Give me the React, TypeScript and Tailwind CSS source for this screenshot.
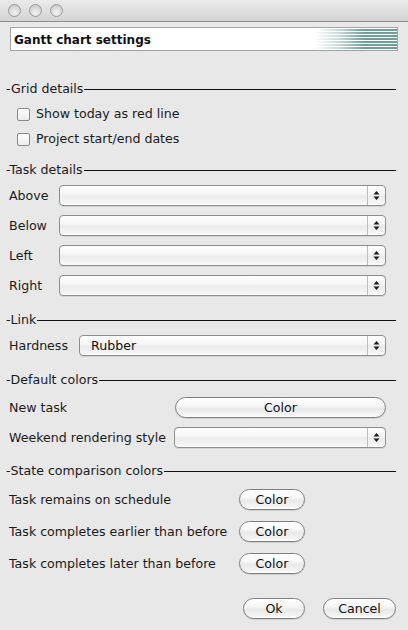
import React from "react";

const font = { fontFamily: '"DejaVu Sans", "Liberation Sans", sans-serif' };

function Arrows() {
  return (
    <svg width="7" height="11" viewBox="0 0 7 11">
      <path d="M3.5 1 L6.5 4.5 L0.5 4.5 Z" fill="#1a1a1a" />
      <path d="M3.5 10 L6.5 6.5 L0.5 6.5 Z" fill="#1a1a1a" />
    </svg>
  );
}

function Select({ value }: { value?: string }) {
  return (
    <div className="flex h-[21px] flex-1 items-stretch rounded-[4px] border border-[#8e8e8e] bg-[linear-gradient(to_bottom,#ffffff_0%,#f6f6f6_40%,#ebebeb_55%,#f4f4f4_85%,#fdfdfd_100%)] shadow-[0_1px_0_rgba(0,0,0,0.08)]">
      <div className="flex flex-1 items-center pl-[11px] pt-[1px] text-[12.6px] text-[#111]">{value}</div>
      <div className="flex w-[18px] items-center justify-center border-l border-[#bdbdbd]">
        <Arrows />
      </div>
    </div>
  );
}

function Pill({ label, className }: { label: string; className: string }) {
  return (
    <div
      className={
        "flex h-[21px] items-center justify-center rounded-full border border-[#7f7f7f] bg-[linear-gradient(to_bottom,#ffffff_0%,#f7f7f7_40%,#e9e9e9_55%,#f3f3f3_85%,#ffffff_100%)] pt-[1px] text-[12.6px] text-[#111] shadow-[0_1px_0_rgba(0,0,0,0.1)] " +
        className
      }
    >
      {label}
    </div>
  );
}

function SectionHeader({ title, className }: { title: string; className: string }) {
  return (
    <div className={"flex h-[16px] items-center pl-[6px] pr-[12px] " + className}>
      <span className="text-[12.6px] leading-none text-[#1a1a1a]">-{title}</span>
      <div className="ml-[1px] h-px flex-1 bg-[#111]" />
    </div>
  );
}

function Checkbox({ label }: { label: string }) {
  return (
    <div className="flex h-[25px] items-center pl-[17px]">
      <div className="h-[13px] w-[13px] rounded-[2px] border border-[#8a8a8a] bg-[linear-gradient(to_bottom,#ffffff,#ececec)]" />
      <span className="ml-[6px] text-[12.6px] text-[#1a1a1a]">{label}</span>
    </div>
  );
}

function Light() {
  return (
    <div className="h-[13px] w-[13px] rounded-full border border-[#9a9a9a] bg-[radial-gradient(circle_at_50%_70%,#f4f4f4_0%,#d6d6d6_60%,#c2c2c2_100%)]" />
  );
}

export default function App() {
  return (
    <div style={font} className="flex h-[630px] w-[408px] flex-col overflow-hidden bg-[#e8e8e8]">
      {/* title bar */}
      <div className="flex h-[22px] items-center gap-[8px] border-b border-[#8f8f8f] bg-[linear-gradient(to_bottom,#ebebeb,#d3d3d3)] pl-[8px]">
        <Light />
        <Light />
        <Light />
      </div>

      {/* header box */}
      <div className="mx-[10px] mt-[5px] flex h-[24px] items-stretch border border-[#a4a4a4] bg-white">
        <div className="flex flex-1 items-center pl-[3px] pt-[2px] text-[12px] font-bold text-[#111]">Gantt chart settings</div>
        <div className="w-[82px] bg-[linear-gradient(to_right,#ffffff_0%,rgba(255,255,255,0.6)_30%,rgba(255,255,255,0)_60%),repeating-linear-gradient(to_bottom,#ffffff_0px,#ffffff_1px,#6e9f9b_1px,#6e9f9b_3px)]" />
      </div>

      <SectionHeader title="Grid details" className="mt-[30px]" />
      <div className="mt-[5px] flex flex-col">
        <Checkbox label="Show today as red line" />
        <Checkbox label="Project start/end dates" />
      </div>

      <SectionHeader title="Task details" className="mt-[10px]" />
      <div className="mt-[7px] flex flex-col gap-[9px] pl-[9px] pr-[22px]">
        {["Above", "Below", "Left", "Right"].map((l) => (
          <div key={l} className="flex h-[21px] items-center">
            <span className="w-[50px] pt-[1px] text-[12.6px] text-[#1a1a1a]">{l}</span>
            <Select />
          </div>
        ))}
      </div>

      <SectionHeader title="Link" className="mt-[16px]" />
      <div className="mt-[7px] flex h-[21px] items-center pl-[9px] pr-[22px]">
        <span className="w-[70px] pt-[1px] text-[12.6px] text-[#1a1a1a]">Hardness</span>
        <Select value="Rubber" />
      </div>

      <SectionHeader title="Default colors" className="mt-[16px]" />
      <div className="mt-[9px] flex h-[21px] items-center pl-[9px] pr-[22px]">
        <span className="w-[166px] pt-[1px] text-[12.6px] text-[#1a1a1a]">New task</span>
        <Pill label="Color" className="flex-1" />
      </div>
      <div className="mt-[9px] flex h-[21px] items-center pl-[9px] pr-[22px]">
        <span className="w-[165px] pt-[1px] text-[12.6px] text-[#1a1a1a]">Weekend rendering style</span>
        <Select />
      </div>

      <SectionHeader title="State comparison colors" className="mt-[15px]" />
      <div className="mt-[10px] flex flex-col gap-[11px] pl-[9px]">
        {["Task remains on schedule", "Task completes earlier than before", "Task completes later than before"].map((l) => (
          <div key={l} className="flex h-[21px] items-center">
            <span className="w-[230px] pt-[1px] text-[12.6px] text-[#1a1a1a]">{l}</span>
            <Pill label="Color" className="w-[66px]" />
          </div>
        ))}
      </div>

      <div className="mt-[24px] flex justify-end gap-[18px] pr-[12px]">
        <Pill label="Ok" className="h-[20px] w-[62px]" />
        <Pill label="Cancel" className="h-[20px] w-[73px]" />
      </div>
    </div>
  );
}
